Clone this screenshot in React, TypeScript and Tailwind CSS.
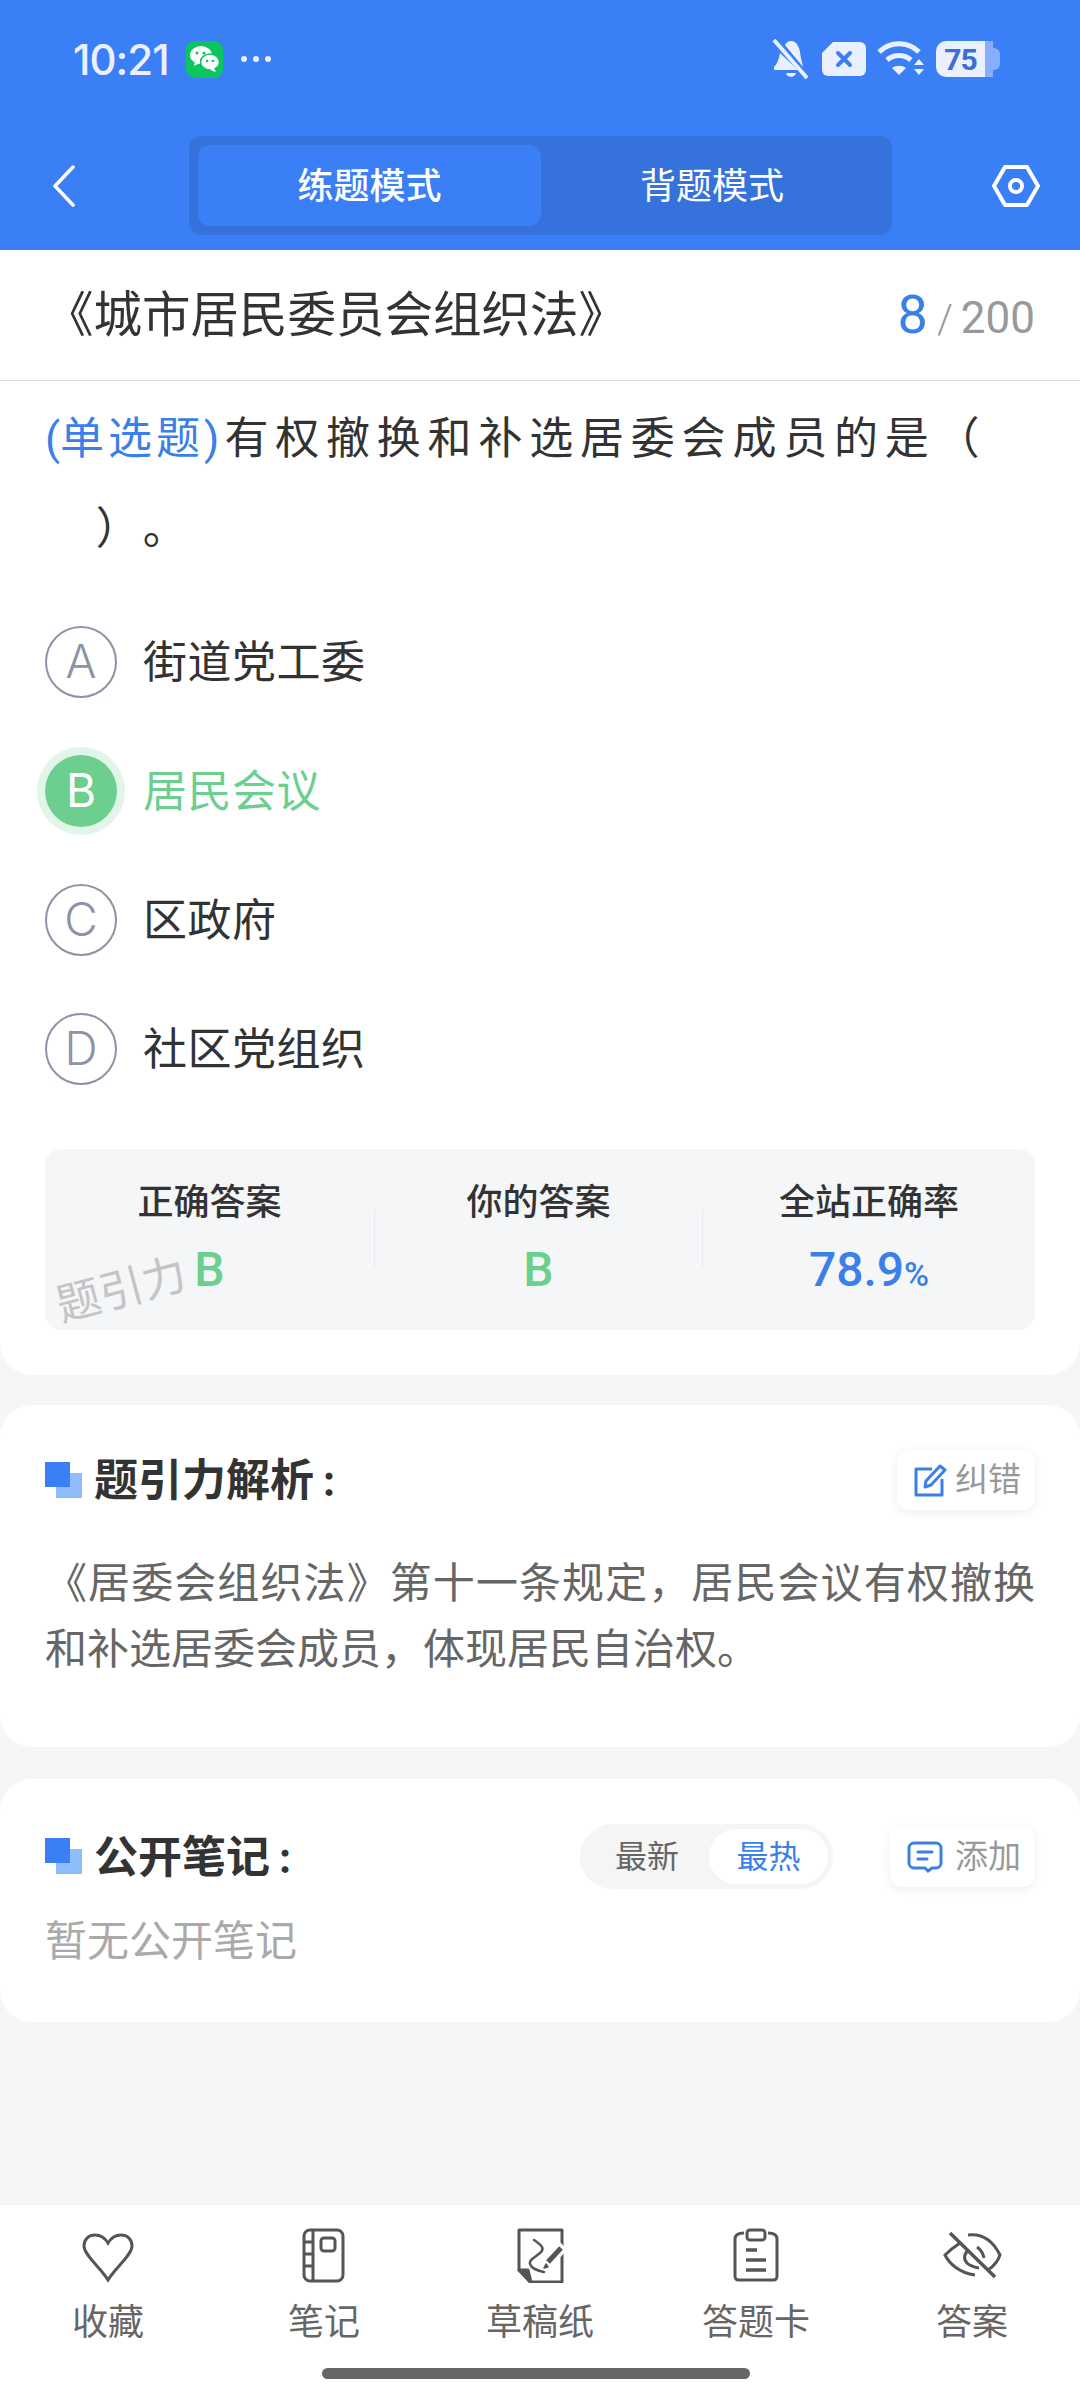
import React from 'react';

const BLUE = '#3b7ff6';

const BellOffIcon = () => (
  <svg width="40" height="42" viewBox="0 0 40 42" fill="#eaf0ff">
    <path d="M20 3c-3 0-5 2-6 4l18 22-2-9c-1-4-1-9-3-12-1-3-4-5-7-5zM9 15c-1 6-3 11-6 14v3h24z" />
    <path d="M15 35h10c-1 5-9 5-10 0z" />
    <path d="M3 2l33 38" stroke="#eaf0ff" strokeWidth="4" fill="none" />
  </svg>
);

const CloseChipIcon = () => (
  <svg width="44" height="34" viewBox="0 0 44 34">
    <path d="M11 0h27a6 6 0 0 1 6 6v22a6 6 0 0 1-6 6H6a6 6 0 0 1-6-6V11z" fill="#eaf0ff" />
    <path d="M16 11l12 12M28 11L16 23" stroke={BLUE} strokeWidth="4" strokeLinecap="round" />
  </svg>
);

const WifiIcon = () => (
  <svg width="48" height="36" viewBox="0 0 48 36" fill="none" stroke="#eaf0ff" strokeWidth="5">
    <path d="M2 11c11-11 29-11 40 0" />
    <path d="M10 19c7-6 17-6 24 0" />
    <path d="M15 27l7 7 7-7c-4-3-10-3-14 0z" fill="#eaf0ff" stroke="none" />
    <path d="M37 24l5-6 5 6zM37 28l5 6 5-6z" fill="#eaf0ff" stroke="none" />
  </svg>
);

const WechatIcon = () => (
  <div className="w-[37px] h-[37px] rounded-[9px] bg-[#0ac560] flex items-center justify-center">
    <svg width="31" height="29" viewBox="0 0 31 29" fill="#fff">
      <ellipse cx="12" cy="10" rx="11" ry="9" />
      <path d="M6 16l-1 5 6-3z" />
      <ellipse cx="21" cy="17" rx="9.5" ry="8" stroke="#0ac560" strokeWidth="1.5" />
      <path d="M25 23l2 4-6-2z" />
      <circle cx="8" cy="8" r="1.5" fill="#0ac560" />
      <circle cx="15" cy="8" r="1.5" fill="#0ac560" />
      <circle cx="18" cy="16" r="1.3" fill="#0ac560" />
      <circle cx="24" cy="16" r="1.3" fill="#0ac560" />
    </svg>
  </div>
);

const SquaresIcon = () => (
  <svg width="37" height="37" viewBox="0 0 37 37" className="shrink-0">
    <rect x="11" y="11" width="26" height="25" fill="#8fbdfb" />
    <rect x="0" y="0" width="25" height="25" fill={BLUE} />
  </svg>
);

const EditIcon = () => (
  <svg width="33" height="33" viewBox="0 0 33 33" fill="none" stroke="#3b7fe8" strokeWidth="3" strokeLinejoin="round">
    <path d="M18 5H2v26h26V15" />
    <path d="M26 2l5 4-14 15-6 2 1-6z" />
  </svg>
);

const CommentIcon = () => (
  <svg width="36" height="32" viewBox="0 0 36 32" fill="none" stroke="#3b7fe8" strokeWidth="3">
    <path d="M7 2h22a5 5 0 0 1 5 5v15a5 5 0 0 1-5 5h-4l-4 3-3-3H7a5 5 0 0 1-5-5V7a5 5 0 0 1 5-5z" />
    <path d="M11 11h14M11 18h9" strokeLinecap="round" />
  </svg>
);

const HeartIcon = () => (
  <svg width="64" height="56" viewBox="0 0 64 56" fill="none" stroke="#555" strokeWidth="3" strokeLinejoin="miter">
    <path d="M32 53C24 40 8 28 8 19 8 12 13 8 19 8c6 0 10 3 13 8 3-5 7-8 13-8 6 0 11 4 11 11 0 9-16 21-24 34z" />
  </svg>
);

const NotebookIcon = () => (
  <svg width="64" height="56" viewBox="0 0 64 56" fill="none" stroke="#555" strokeWidth="3">
    <rect x="12" y="3" width="39" height="51" rx="6" />
    <path d="M21 3v51M12 15h9M12 27h9M12 39h9" />
    <rect x="29" y="11" width="14" height="13" rx="3" />
  </svg>
);

const SketchIcon = () => (
  <svg width="64" height="56" viewBox="0 0 64 56" fill="none" stroke="#555" strokeWidth="3" strokeLinejoin="round">
    <path d="M11 3h43v52H22L11 43z" />
    <path d="M11 43h9l3 12z" fill="#555" />
    <path d="M26 13c6 4 12 8 6 13-6 5-14 8-8 14 3 3 8 4 12 5" strokeWidth="2.5" strokeLinecap="round" />
    <path d="M56 19L36 40" stroke="#fff" strokeWidth="10" />
    <path d="M53 21L40 35" strokeWidth="5" />
    <path d="M38 37l-2 4 4-1z" fill="#555" strokeWidth="1.5" />
  </svg>
);

const ClipboardIcon = () => (
  <svg width="64" height="56" viewBox="0 0 64 56" fill="none" stroke="#555" strokeWidth="3">
    <path d="M20 6c-5 0-9 1-9 6v37c0 3 1 4 4 4h34c3 0 4-1 4-4V12c0-5-4-6-9-6" />
    <rect x="23" y="3" width="18" height="10" rx="3" />
    <path d="M22 23h11M22 33h20M22 43h20" strokeWidth="3.5" />
  </svg>
);

const EyeOffIcon = () => (
  <svg width="64" height="56" viewBox="0 0 64 56" fill="none" stroke="#555" strokeWidth="3">
    <path d="M20 16C14 20 9 24 5 28c4 8 14 18 30 20" />
    <path d="M28 8c16-2 26 8 32 20-2 6-6 11-12 15" />
    <path d="M29 23c-5 3-6 9-2 13 3 3 7 4 12 5" />
    <path d="M37 20c3 2 6 6 7 11" />
    <path d="M10 6l45 44" strokeWidth="3.5" />
  </svg>
);

const options = [
  { key: 'A', text: '街道党工委' },
  { key: 'B', text: '居民会议', picked: true },
  { key: 'C', text: '区政府' },
  { key: 'D', text: '社区党组织' },
];

const tabs = [
  { label: '收藏', icon: <HeartIcon /> },
  { label: '笔记', icon: <NotebookIcon /> },
  { label: '草稿纸', icon: <SketchIcon /> },
  { label: '答题卡', icon: <ClipboardIcon /> },
  { label: '答案', icon: <EyeOffIcon /> },
];

export default function App() {
  return (
    <div className="w-[1080px] h-[2400px] flex flex-col bg-[#f4f6f8] overflow-hidden [font-family:Inter,'Noto_Sans_CJK_SC',sans-serif]">
      {/* Header */}
      <header className="bg-[#3b7ff6] pb-[15px]">
        <div className="h-[118px] flex items-center pl-[73px] pr-[80px]">
          <span className="text-[42px] font-medium text-[#eaf0ff] tracking-[-1px] mr-[17px]">10:21</span>
          <WechatIcon />
          <div className="flex gap-[6px] ml-[18px]">
            <span className="w-[6px] h-[6px] rounded-full bg-[#eaf0ff]" />
            <span className="w-[6px] h-[6px] rounded-full bg-[#eaf0ff]" />
            <span className="w-[6px] h-[6px] rounded-full bg-[#eaf0ff]" />
          </div>
          <div className="ml-auto flex items-center gap-[11px]">
            <BellOffIcon />
            <CloseChipIcon />
            <WifiIcon />
            <div className="flex items-center">
              <div className="w-[49px] h-[36px] rounded-l-[10px] bg-[#eaf0ff] flex items-center justify-center text-[30px] font-bold text-[#3a6fd6] tracking-[-1px] [font-family:Roboto,sans-serif]">
                75
              </div>
              <div className="w-[8px] h-[36px] bg-[#86aefa]" />
              <div className="w-[7px] h-[22px] rounded-r-[6px] bg-[#86aefa]" />
            </div>
          </div>
        </div>
        <div className="mt-[18px] h-[99px] flex items-center pl-[52px]">
          <svg width="24" height="42" viewBox="0 0 24 42" fill="none" stroke="#fff" strokeWidth="3.5" strokeLinecap="round" strokeLinejoin="round">
            <path d="M21 2L3 21l18 19" />
          </svg>
          <div className="ml-[113px] w-[703px] h-[99px] rounded-[12px] bg-[#3672db] p-[9px] flex">
            <div className="w-[343px] rounded-[12px] bg-[#3b7ff6] flex items-center justify-center text-[36px] font-medium text-white">
              练题模式
            </div>
            <div className="flex-1 flex items-center justify-center text-[36px] text-white">背题模式</div>
          </div>
          <svg className="ml-[100px]" width="48" height="44" viewBox="0 0 48 44" fill="none" stroke="#fff" strokeWidth="4" strokeLinejoin="round">
            <path d="M13 3h22l11 19-11 19H13L2 22z" />
            <circle cx="24" cy="22" r="6" />
          </svg>
        </div>
      </header>

      <main className="flex-1 flex flex-col">
        {/* Question */}
        <section className="bg-white rounded-b-[32px] pb-[45px]">
          <div className="h-[131px] border-b border-[#dcdcdc] px-[45px] flex items-center justify-between">
            <h1 className="text-[48.5px] text-[#333]">《城市居民委员会组织法》</h1>
            <div className="flex items-baseline text-[#999] mb-[2px] [font-family:Roboto,'Noto_Sans_CJK_SC',sans-serif]">
              <span className="text-[54px] text-[#3b7fe8]">8</span>
              <span className="text-[40px] font-light ml-[9px]">/</span>
              <span className="text-[44px] ml-[8px]">200</span>
            </div>
          </div>
          <div className="px-[45px]">
            <p className="pt-[13px] text-[44px] leading-[90px] text-[#333] tracking-[6.8px] [font-family:Roboto,'Noto_Sans_CJK_SC',sans-serif]">
              <span className="text-[#3b7fe8] tracking-[0px]">
                (<span className="tracking-[4px]">单选题</span>)
              </span>
              <span className="ml-[5px]">有权撤换和补选居委会成员的是（</span>
              <br />
              {'\u3000'}）<span className="ml-[18px]">。</span>
            </p>
            <div className="mt-[23px]">
              {options.map((o) => (
                <div key={o.key} className="h-[129px] flex items-center gap-[26px]">
                  {o.picked ? (
                    <div className="w-[72px] h-[72px] rounded-full bg-[#6dcf8f] ring-8 ring-[#e2f5e9] flex items-center justify-center text-[46px] text-white">
                      {o.key}
                    </div>
                  ) : (
                    <div className="w-[72px] h-[72px] rounded-full border-2 border-[#8e92a6] flex items-center justify-center text-[46px] font-light text-[#8e92a6]">
                      {o.key}
                    </div>
                  )}
                  <span className={`text-[44px] tracking-[0.5px] ${o.picked ? 'text-[#6dcf8f]' : 'text-[#333]'}`}>{o.text}</span>
                </div>
              ))}
            </div>
            <div className="relative mt-[36px] h-[181px] rounded-[16px] bg-[#f4f6f8] flex">
              <div className="w-[329px] pt-[32px] flex flex-col items-center">
                <span className="text-[36px] leading-[42px] font-medium text-[#333]">正确答案</span>
                <span className="mt-[19px] text-[48px] leading-[56px] font-medium text-[#6dcf8f] [font-family:Roboto,sans-serif]">B</span>
              </div>
              <div className="w-px h-[59px] mt-[60px] bg-[#e8eaed]" />
              <div className="w-[327px] pt-[32px] flex flex-col items-center">
                <span className="text-[36px] leading-[42px] font-medium text-[#333]">你的答案</span>
                <span className="mt-[19px] text-[48px] leading-[56px] font-medium text-[#6dcf8f] [font-family:Roboto,sans-serif]">B</span>
              </div>
              <div className="w-px h-[59px] mt-[60px] bg-[#e8eaed]" />
              <div className="flex-1 pt-[32px] flex flex-col items-center">
                <span className="text-[36px] leading-[42px] font-medium text-[#333]">全站正确率</span>
                <span className="mt-[19px] text-[48px] leading-[56px] font-medium text-[#3b7fe8] [font-family:Roboto,sans-serif]">
                  78.9<span className="text-[34px]">%</span>
                </span>
              </div>
              <span className="absolute left-[10px] top-[118px] -rotate-[15deg] text-[44px] leading-none text-[#c4c4c4]">题引力</span>
            </div>
          </div>
        </section>

        {/* Analysis */}
        <section className="mt-[30px] bg-white rounded-[32px] px-[45px] pt-[45px] pb-[65px]">
          <div className="h-[60px] flex items-center">
            <SquaresIcon />
            <h2 className="ml-[12px] text-[44px] font-semibold text-[#333]">
              题引力解析<span className="ml-[8px]">:</span>
            </h2>
            <button className="ml-auto w-[138px] h-[60px] pr-[14px] rounded-[12px] bg-white shadow-[0_2px_10px_rgba(0,0,0,0.08)] flex items-center justify-end gap-[8px] text-[33px] text-[#999]">
              <EditIcon />
              纠错
            </button>
          </div>
          <p className="mt-[40px] text-[42px] leading-[66px] text-justify text-[#666]">
            《居委会组织法》第十一条规定，居民会议有权撤换和补选居委会成员，体现居民自治权。
          </p>
        </section>

        {/* Notes */}
        <section className="mt-[32px] bg-white rounded-[32px] px-[45px] pt-[45px] pb-[48px]">
          <div className="h-[65px] flex items-center">
            <SquaresIcon />
            <h2 className="ml-[12px] text-[44px] font-semibold text-[#333]">
              公开笔记<span className="ml-[8px]">:</span>
            </h2>
            <div className="ml-auto w-[253px] h-[65px] rounded-full bg-[#f5f5f5] flex items-center p-[5px] text-[32px]">
              <span className="flex-1 text-center text-[#666]">最新</span>
              <span className="w-[119px] h-[55px] rounded-full bg-white flex items-center justify-center text-[#3b7fe8]">最热</span>
            </div>
            <button className="ml-[57px] w-[145px] h-[60px] pr-[14px] rounded-[12px] bg-white shadow-[0_2px_10px_rgba(0,0,0,0.08)] flex items-center justify-end gap-[12px] text-[33px] text-[#999]">
              <CommentIcon />
              添加
            </button>
          </div>
          <p className="mt-[19px] text-[42px] leading-[66px] text-[#aaa]">暂无公开笔记</p>
        </section>
      </main>

      {/* Bottom bar */}
      <footer className="h-[196px] bg-white border-t border-[#f0f0f0] pt-[22px]">
        <div className="grid grid-cols-5">
          {tabs.map((t) => (
            <div key={t.label} className="flex flex-col items-center">
              {t.icon}
              <span className="mt-[17px] text-[36px] leading-[44px] text-[#666]">{t.label}</span>
            </div>
          ))}
        </div>
        <div className="ml-[322px] mt-[24px] w-[428px] h-[11px] rounded-full bg-[#666]" />
      </footer>
    </div>
  );
}
